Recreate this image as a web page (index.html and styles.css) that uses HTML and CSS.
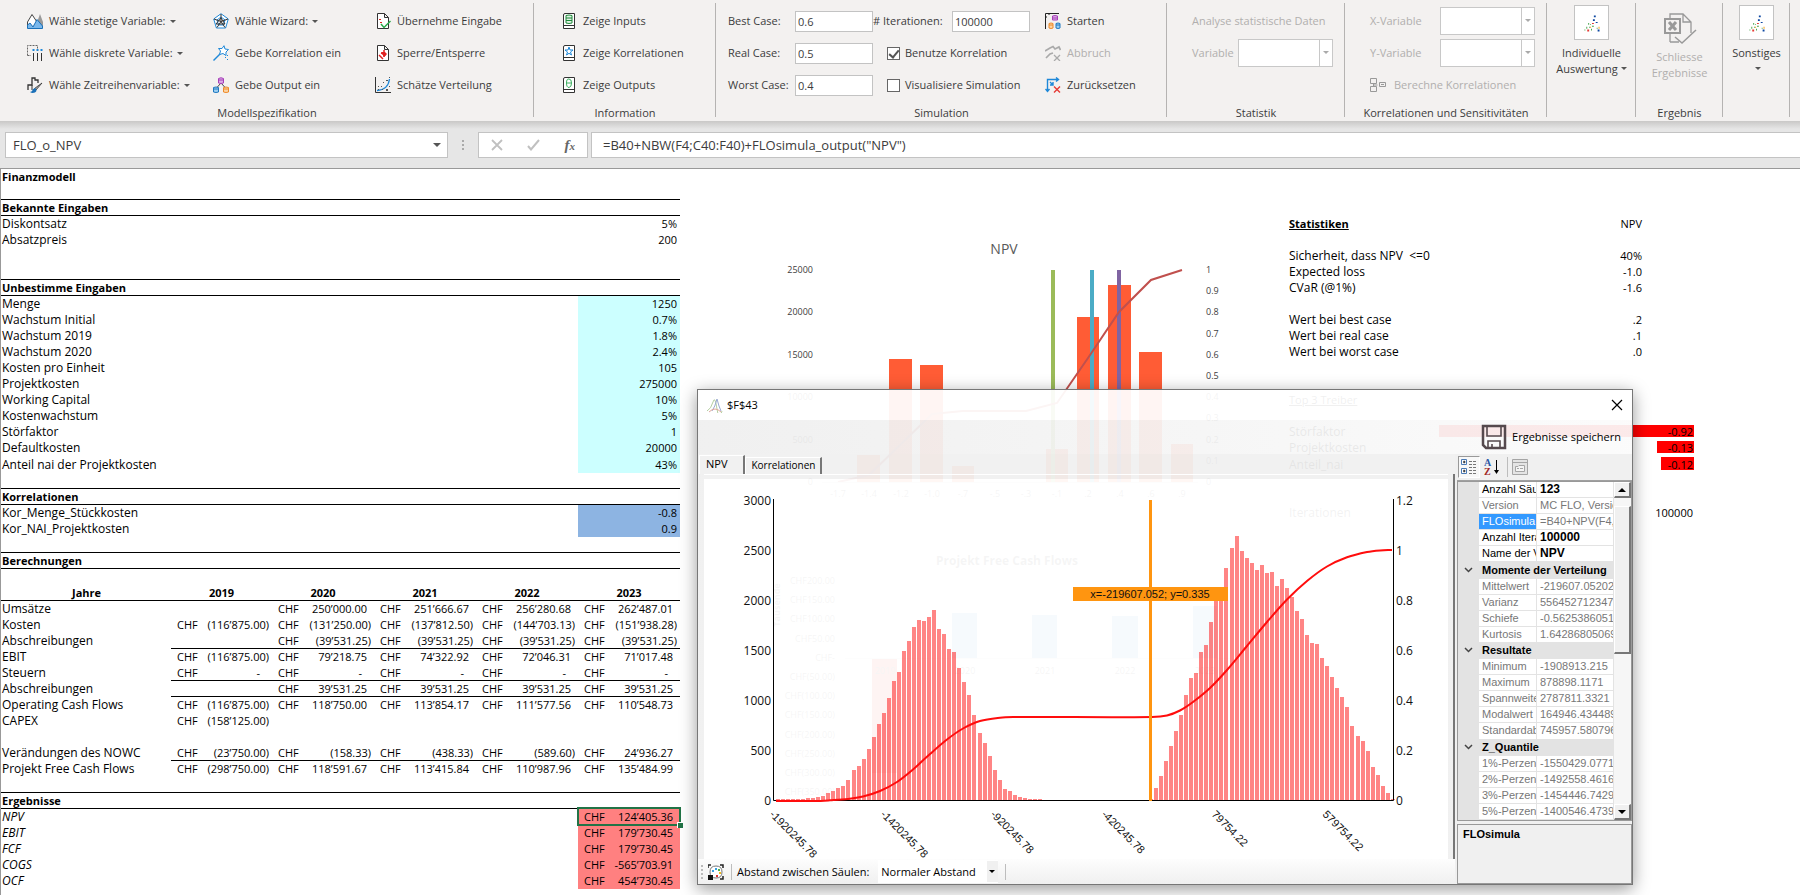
FILE: index.html
```html
<!DOCTYPE html>
<html lang="de">
<head>
<meta charset="utf-8">
<title>FLO_o_NPV</title>
<link rel="stylesheet" href="styles.css">
</head>
<body>
<svg class="defs" aria-hidden="true">
  <symbol id="excel-dots" viewBox="0 0 35 35"><path fill="#0d47a1" d="M20 10h2v2h-2zM22 17h2v1h-2zM19 14h2v2h-2zM24 25h2v2h-2z"/><path fill="#43a047" d="M14 18h1v2h-1zM16 19h1v1h-1zM12 22h1v2h-1zM18 21h2v1h-2zM10 25h1v1h-1zM23 23h1v1h-1zM17 24h1v2h-1zM15 22h1v1h-1z"/><path fill="#e53935" d="M13 25h2v2h-2zM18 18h2v1h-2z"/><path fill="#ff9800" d="M16 22h1v1h-1zM25 22h1v2h-1z"/></symbol>
  <symbol id="book" viewBox="0 0 12 16"><path fill="#fff" stroke="#333" d="M.5 15.500V2Q.5.500 2 .5H11.500V15.500ZM.5 12.500H11.500"/></symbol>
  <symbol id="page" viewBox="0 0 16 16"><path fill="#fff" stroke="#333" d="M2.500 15.500V.5H9.500L13.500 4.500V15.500ZM9.500.5V4.500H13.500"/></symbol>
</svg>

<header class="ribbon">
  <section class="group g-model">
    <div class="items">
      <button class="cmd"><svg viewBox="0 0 16 16" width="16" height="16"><path fill="#999" d="M8 15L13 1 16 9V15Z"/><path fill="#fff" stroke="#444" d="M.5 15V9L5 1.500 10 9"/><path fill="#7ab8ec" stroke="#1a70b8" d="M.5 15.500V12L3 10 6 14 10 6.500 15.500 13V15.500Z"/></svg>Wähle stetige Variable:<i class="caret"></i></button>
      <button class="cmd"><svg viewBox="0 0 16 16" width="16" height="16"><path fill="#fff" stroke="#1e88d8" d="M8 .7L15.300 6 12.600 15H3.400L.7 6ZM8 4L12 7 10.500 12H5.500L4 7Z"/><path fill="none" stroke="#333" d="M8 1V8.500L1 6M8 8.500L15 6M8 8.500L4 14.500M8 8.500L12 14.500M3 11L8 5 12 11Z"/></svg>Wähle Wizard:<i class="caret"></i></button>
      <button class="cmd"><svg viewBox="0 0 16 16" width="16" height="16"><use href="#page"/><path fill="none" stroke="#e02020" stroke-dasharray="2 2" d="M4 6.500H8M5 9.500H9"/><path fill="none" stroke="#2aa84a" stroke-width="1.500" d="M6 11L9 14.500 15.500 8"/></svg>Übernehme Eingabe</button>
      <button class="cmd"><svg viewBox="0 0 16 16" width="16" height="16"><path fill="none" stroke="#666" stroke-dasharray="2 1" d="M.5 10.500V.5H10.500V4M.5 10.500H4"/><path stroke="#333" d="M6.500 8V16M10.500 8V16M14.500 8V16"/><path fill="#1e88d8" d="M5.500 4h2v2h-2zM9.500 4h2v2h-2zM13.500 4h2v2h-2z"/></svg>Wähle diskrete Variable:<i class="caret"></i></button>
      <button class="cmd"><svg viewBox="0 0 16 16" width="16" height="16"><path stroke="#1e88d8" stroke-width="1.400" d="M.5 15.500L8 8"/><path fill="#fff" stroke="#1e88d8" d="M11 .7L12 4 15.500 4.500 13 7 13 10.500 10 8.500 6.500 9.500 7.500 6 5.500 3.500 9 3.500Z"/><path fill="#1e88d8" d="M12 12h1v1h-1zM14 10h1v1h-1zM14 14h1v1h-1z"/></svg>Gebe Korrelation ein</button>
      <button class="cmd"><svg viewBox="0 0 16 16" width="16" height="16"><use href="#page"/><path stroke="#e02020" stroke-width="1.500" d="M4 10L8 14M9 5V12M6 8L11 10"/><path fill="#e02020" d="M6 7L10 7 12 9 9 12Z"/></svg>Sperre/Entsperre</button>
      <button class="cmd"><svg viewBox="0 0 16 16" width="16" height="16"><path fill="none" stroke="#333" stroke-width="1.300" d="M1 13V8H5V1H8V3H11V6"/><path stroke="#333" d="M5 8V13"/><path fill="#aaa" stroke="#333" stroke-width=".8" d="M15 6L9 13 7.500 11.500Z"/><path fill="#1a70b8" d="M8 11Q11 13 8 15.500Q5 16.500 3 15Q6 14 5.500 12.500Z"/></svg>Wähle Zeitreihenvariable:<i class="caret"></i></button>
      <button class="cmd"><svg viewBox="0 0 16 16" width="16" height="16"><path fill="none" stroke="#444" d="M8 6L3.500 11M8 6L12.500 11"/><path fill="#dba9e6" stroke="#a63fb8" d="M5.500 1.500Q8 0 10.500 1.500V6Q8 7 5.500 6ZM5.500 3H10.500"/><path fill="#9fd0f2" stroke="#1e78c0" d="M.5 10.500Q3 9.500 5.500 10.500V15Q3 16 .5 15ZM.5 12H5.500"/><path fill="#fcd5a5" stroke="#ee8a2a" d="M10.500 10.500Q13 9.500 15.500 10.500V15Q13 16 10.500 15ZM10.500 12H15.500"/></svg>Gebe Output ein</button>
      <button class="cmd"><svg viewBox="0 0 16 16" width="16" height="16"><path fill="none" stroke="#333" d="M.5 0V15.500H16"/><path fill="none" stroke="#1e88d8" stroke-width="1.300" d="M2 13.500Q13 13 14.500 2"/><path fill="#555" d="M3 9h1v1h-1zM3 12h1v1h-1zM6 9h1v1h-1zM8 5h1v1h-1zM11 3h2v1h-2zM14 0h1v1h-1zM7 12h1v1h-1zM11 12h2v2h-2zM14 9h1v1h-1z"/></svg>Schätze Verteilung</button>
    </div>
    <h2>Modellspezifikation</h2>
  </section>

  <section class="group g-info">
    <div class="items">
      <button class="cmd"><svg viewBox="0 0 12 16" width="12" height="16"><use href="#book"/><path fill="#dff3e3" stroke="#1f8a3b" d="M3 2.500Q6 1.500 9 2.500V10Q6 11 3 10ZM3 5H9M3 7.500H9"/></svg>Zeige Inputs</button>
      <button class="cmd"><svg viewBox="0 0 12 16" width="12" height="16"><use href="#book"/><path fill="#fff" stroke="#1e88d8" d="M6 2L7 5H10L7.500 7 8.500 10 6 8.300 3.500 10 4.500 7 2 5H5Z"/></svg>Zeige Korrelationen</button>
      <button class="cmd"><svg viewBox="0 0 12 16" width="12" height="16"><use href="#book"/><path fill="none" stroke="#3cb060" d="M6 2Q8.500 2 8.500 6T6 10.500Q3.500 10.500 3.500 6T6 2ZM3.500 6H8.500"/></svg>Zeige Outputs</button>
    </div>
    <h2>Information</h2>
  </section>

  <section class="group g-sim">
    <div class="items">
      <label class="field"><span>Best Case:</span><input type="text" value="0.6"></label>
      <label class="field iter"><span># Iterationen:</span><input type="text" value="100000"></label>
      <button class="cmd"><svg viewBox="0 0 16 16" width="16" height="16"><path fill="none" stroke="#222" d="M.5 16V.5H14M.5 4H2M4 2V.5"/><path fill="#dba9e6" stroke="#a63fb8" d="M7.500 3Q10 2 12.500 3V7H7.500ZM7.500 5H12.500"/><path fill="#fcd5a5" stroke="#ee8a2a" d="M4 10.500Q6 9.500 8 10.500V15Q6 16 4 15ZM4 12H8"/><path fill="#9fd0f2" stroke="#1e78c0" d="M11 10.500Q13 9.500 15 10.500V15Q13 16 11 15ZM11 12H15"/></svg>Starten</button>
      <label class="field"><span>Real Case:</span><input type="text" value="0.5"></label>
      <label class="check"><input type="checkbox" checked>Benutze Korrelation</label>
      <button class="cmd" disabled><svg viewBox="0 0 16 16" width="16" height="16"><path fill="none" stroke="#aaa" stroke-width="1.700" d="M0 6L5 3 8 1.500 10 4 14 2 15.500 5M1 13L5 9 8 8"/><path stroke="#aaa" stroke-width="1.300" d="M9 10L15 16M15 10L9 16"/></svg>Abbruch</button>
      <label class="field"><span>Worst Case:</span><input type="text" value="0.4"></label>
      <label class="check"><input type="checkbox">Visualisiere Simulation</label>
      <button class="cmd"><svg viewBox="0 0 16 16" width="16" height="16"><path fill="none" stroke="#1e88d8" stroke-width="1.400" d="M2.500 14V2.500H13M11 .5L13.500 2.500 11 4.500M.5 12L2.500 14.500 4.500 12M5 5L8 8M8 5V8H5"/><path stroke="#e53935" stroke-width="1.400" d="M9 9.500L15 15.500M15 9.500L9 15.500"/></svg>Zurücksetzen</button>
    </div>
    <h2>Simulation</h2>
  </section>

  <section class="group g-stat off">
    <div class="items">
      <span>Analyse statistische Daten</span>
      <label class="field"><span>Variable</span><span class="combo"><select disabled></select></span></label>
    </div>
    <h2>Statistik</h2>
  </section>

  <section class="group g-corr off">
    <div class="items">
      <label class="field"><span>X-Variable</span><span class="combo"><select disabled></select></span></label>
      <label class="field"><span>Y-Variable</span><span class="combo"><select disabled></select></span></label>
      <button class="cmd" disabled><svg viewBox="0 0 16 16" width="16" height="16"><path fill="none" stroke="#999" d="M.5 1.500H6.500V6.500H.5ZM.5 9.500H6.500V14.500H.5ZM9.500 5.500H15.500V9.500H9.500ZM3.500 6.500V9.500M3.500 8H7.500M11 7.500H14"/></svg>Berechne Korrelationen</button>
    </div>
    <h2>Korrelationen und Sensitivitäten</h2>
  </section>

  <section class="group g-ind"><button class="big"><svg class="framed" width="35" height="35"><use href="#excel-dots"/></svg><span>Individuelle<br>Auswertung<i class="caret"></i></span></button></section>
  <section class="group g-res off">
    <button class="big low" disabled><svg viewBox="0 0 34 32" width="34" height="32"><path fill="none" stroke="#999" stroke-width="1.300" d="M7 29V1H20L28 9V20M20 1V9H28M7 29H16"/><path fill="#f3f1f0" stroke="#999" stroke-width="2" d="M2 6H17V20H2Z"/><path stroke="#999" stroke-width="3" d="M6 9L13 17M13 9L6 17"/><path fill="none" stroke="#999" stroke-width="1.500" d="M12 24L19 30 33 17"/></svg><span>Schliesse<br>Ergebnisse</span></button>
    <h2>Ergebnis</h2>
  </section>
  <section class="group g-misc"><button class="big"><svg class="framed" width="35" height="35"><use href="#excel-dots"/></svg><span>Sonstiges<br><i class="caret"></i></span></button></section>
</header>

<div class="formula-bar">
  <div class="namebox"><input type="text" value="FLO_o_NPV" aria-label="Namenfeld"><i class="caret"></i></div>
  <span class="grip3"><i></i><i></i><i></i></span>
  <div class="fx">
    <button aria-label="Abbrechen"><svg viewBox="0 0 12 12" width="12" height="12"><path stroke="#c0c0c0" stroke-width="1.800" d="M1 1L11 11M11 1L1 11"/></svg></button>
    <button aria-label="Eingeben"><svg viewBox="0 0 13 12" width="13" height="12"><path fill="none" stroke="#c0c0c0" stroke-width="2" d="M1 7L4 10.500 12 1"/></svg></button>
    <button class="fn" aria-label="Funktion einfügen">f<small>x</small></button>
  </div>
  <input class="formula" type="text" aria-label="Formel" value='=B40+NBW(F4;C40:F40)+FLOsimula_output("NPV")'>
</div>

<main class="sheet">
  <table class="model">
    <colgroup><col class="c-label"><col class="c-first"><col class="c-year"><col class="c-year"><col class="c-year"><col class="c-year"></colgroup>
    <tr><th colspan="6">Finanzmodell</th></tr>
    <tr class="line"><td colspan="6"></td></tr>
    <tr class="line"><th colspan="6">Bekannte Eingaben</th></tr>
    <tr><td colspan="5">Diskontsatz</td><td class="v">5%</td></tr>
    <tr><td colspan="5">Absatzpreis</td><td class="v">200</td></tr>
    <tr><td colspan="6"></td></tr>
    <tr class="line"><td colspan="6"></td></tr>
    <tr class="line"><th colspan="6">Unbestimme Eingaben</th></tr>
    <tr><td colspan="5">Menge</td><td class="v in">1250</td></tr>
    <tr><td colspan="5">Wachstum Initial</td><td class="v in">0.7%</td></tr>
    <tr><td colspan="5">Wachstum 2019</td><td class="v in">1.8%</td></tr>
    <tr><td colspan="5">Wachstum 2020</td><td class="v in">2.4%</td></tr>
    <tr><td colspan="5">Kosten pro Einheit</td><td class="v in">105</td></tr>
    <tr><td colspan="5">Projektkosten</td><td class="v in">275000</td></tr>
    <tr><td colspan="5">Working Capital</td><td class="v in">10%</td></tr>
    <tr><td colspan="5">Kostenwachstum</td><td class="v in">5%</td></tr>
    <tr><td colspan="5">Störfaktor</td><td class="v in">1</td></tr>
    <tr><td colspan="5">Defaultkosten</td><td class="v in">20000</td></tr>
    <tr class="tall"><td colspan="5">Anteil nai der Projektkosten</td><td class="v in">43%</td></tr>
    <tr class="line"><td colspan="6"></td></tr>
    <tr class="line"><th colspan="6">Korrelationen</th></tr>
    <tr><td colspan="5">Kor_Menge_Stückkosten</td><td class="v cor">-0.8</td></tr>
    <tr><td colspan="5">Kor_NAI_Projektkosten</td><td class="v cor">0.9</td></tr>
    <tr class="line"><td colspan="6"></td></tr>
    <tr class="line"><th colspan="6">Berechnungen</th></tr>
    <tr><td colspan="6"></td></tr>
    <tr class="line years"><th>Jahre</th><th>2019</th><th>2020</th><th>2021</th><th>2022</th><th>2023</th></tr>
    <tr><td>Umsätze</td><td></td><td class="m"><i>CHF</i>250’000.00</td><td class="m"><i>CHF</i>251’666.67</td><td class="m"><i>CHF</i>256’280.68</td><td class="m"><i>CHF</i>262’487.01</td></tr>
    <tr><td>Kosten</td><td class="m n"><i>CHF</i>(116’875.00)</td><td class="m n"><i>CHF</i>(131’250.00)</td><td class="m n"><i>CHF</i>(137’812.50)</td><td class="m n"><i>CHF</i>(144’703.13)</td><td class="m n"><i>CHF</i>(151’938.28)</td></tr>
    <tr class="part"><td>Abschreibungen</td><td></td><td class="m n"><i>CHF</i>(39’531.25)</td><td class="m n"><i>CHF</i>(39’531.25)</td><td class="m n"><i>CHF</i>(39’531.25)</td><td class="m n"><i>CHF</i>(39’531.25)</td></tr>
    <tr><td>EBIT</td><td class="m n"><i>CHF</i>(116’875.00)</td><td class="m"><i>CHF</i>79’218.75</td><td class="m"><i>CHF</i>74’322.92</td><td class="m"><i>CHF</i>72’046.31</td><td class="m"><i>CHF</i>71’017.48</td></tr>
    <tr class="part"><td>Steuern</td><td class="m d"><i>CHF</i>-</td><td class="m d"><i>CHF</i>-</td><td class="m d"><i>CHF</i>-</td><td class="m d"><i>CHF</i>-</td><td class="m d"><i>CHF</i>-</td></tr>
    <tr class="part"><td>Abschreibungen</td><td></td><td class="m"><i>CHF</i>39’531.25</td><td class="m"><i>CHF</i>39’531.25</td><td class="m"><i>CHF</i>39’531.25</td><td class="m"><i>CHF</i>39’531.25</td></tr>
    <tr><td>Operating Cash Flows</td><td class="m n"><i>CHF</i>(116’875.00)</td><td class="m"><i>CHF</i>118’750.00</td><td class="m"><i>CHF</i>113’854.17</td><td class="m"><i>CHF</i>111’577.56</td><td class="m"><i>CHF</i>110’548.73</td></tr>
    <tr><td>CAPEX</td><td class="m n"><i>CHF</i>(158’125.00)</td><td colspan="4"></td></tr>
    <tr><td colspan="6"></td></tr>
    <tr class="part"><td>Verändungen des NOWC</td><td class="m n"><i>CHF</i>(23’750.00)</td><td class="m n"><i>CHF</i>(158.33)</td><td class="m n"><i>CHF</i>(438.33)</td><td class="m n"><i>CHF</i>(589.60)</td><td class="m"><i>CHF</i>24’936.27</td></tr>
    <tr><td>Projekt Free Cash Flows</td><td class="m n"><i>CHF</i>(298’750.00)</td><td class="m"><i>CHF</i>118’591.67</td><td class="m"><i>CHF</i>113’415.84</td><td class="m"><i>CHF</i>110’987.96</td><td class="m"><i>CHF</i>135’484.99</td></tr>
    <tr class="line"><td colspan="6"></td></tr>
    <tr class="line"><th colspan="6">Ergebnisse</th></tr>
    <tr class="out"><td colspan="5">NPV</td><td class="m sel"><i>CHF</i>124’405.36</td></tr>
    <tr class="out"><td colspan="5">EBIT</td><td class="m"><i>CHF</i>179’730.45</td></tr>
    <tr class="out"><td colspan="5">FCF</td><td class="m"><i>CHF</i>179’730.45</td></tr>
    <tr class="out"><td colspan="5">COGS</td><td class="m"><i>CHF</i>-565’703.91</td></tr>
    <tr class="out"><td colspan="5">OCF</td><td class="m"><i>CHF</i>454’730.45</td></tr>
  </table>

  <div class="charts">
    <svg id="npv-chart" viewBox="770 236 460 264" width="460" height="264" role="img" aria-label="NPV">
      <text class="ct" x="1004" y="254">NPV</text>
      <g fill="#ff5c35"><path d="M857 455h23v27h-23zM889 359h23v123h-23zM920 365h23v117h-23zM952 466h22v16h-22zM1046 449h22v33h-22zM1077 317h22v165h-22zM1108 285h23v197h-23zM1139 352h23v130h-23zM1171 444h22v38h-22z"/></g>
      <path fill="#9bbb59" d="M1051 270h4v212h-4z"/><path fill="#4bacc6" d="M1090 270h4v212h-4z"/><path fill="#8064a2" d="M1117 270h4v212h-4z"/>
      <path fill="none" stroke="#c0504d" stroke-width="2" d="M838 482L869 475 932 414 963 411H1026L1057 403 1088 358 1119 312 1151 280 1182 270"/>
      <path stroke="#d9d9d9" d="M822 482.500H1198"/>
    </svg>
    <svg id="fcf-chart" viewBox="770 545 460 260" width="460" height="260" role="img" aria-label="Projekt Free Cash Flows">
      <text class="fcf-title" x="1007" y="565">Projekt Free Cash Flows</text>
      <path fill="#e8331f" d="M872 659h25v114h-25z"/>
      <path fill="#5b9bd5" d="M952 613h25v45h-25zM1032 615h25v43h-25zM1112 616h26v42h-26zM1193 606h24v52h-24z"/>
      <path stroke="#d9d9d9" d="M845 658.500H1245"/>
      <text class="rot" transform="translate(780 605) rotate(-90)">Tausende</text>
    </svg>
  </div>

  <table class="stats">
    <colgroup><col class="s-label"><col class="s-npv"><col class="s-drv"></colgroup>
    <tr><th>Statistiken</th><td>NPV</td><td></td></tr>
    <tr><td colspan="3"></td></tr>
    <tr><td>Sicherheit, dass NPV&nbsp; &lt;=0</td><td>40%</td><td></td></tr>
    <tr><td>Expected loss</td><td>-1.0</td><td></td></tr>
    <tr><td>CVaR (@1%)</td><td>-1.6</td><td></td></tr>
    <tr><td colspan="3"></td></tr>
    <tr><td>Wert bei best case</td><td>.2</td><td></td></tr>
    <tr><td>Wert bei real case</td><td>.1</td><td></td></tr>
    <tr><td>Wert bei worst case</td><td>.0</td><td></td></tr>
    <tr><td colspan="3"></td></tr>
    <tr><td colspan="3"></td></tr>
    <tr><th class="sub">Top 3 Treiber</th><td></td><td></td></tr>
    <tr><td colspan="3"></td></tr>
    <tr><td>Störfaktor</td><td></td><td class="bar"><b style="width:255px"></b><span>-0.92</span></td></tr>
    <tr><td>Projektkosten</td><td></td><td class="bar"><b style="width:37px"></b><span>-0.13</span></td></tr>
    <tr class="tall"><td>Anteil_nai</td><td></td><td class="bar"><b style="width:33px"></b><span>-0.12</span></td></tr>
    <tr><td colspan="3"></td></tr>
    <tr><td colspan="3"></td></tr>
    <tr><td>Iterationen</td><td></td><td>100000</td></tr>
  </table>

  <section class="dialog" role="dialog" aria-label="$F$43">
    <header class="titlebar">
      <svg viewBox="0 0 16 16" width="16" height="16"><path fill="none" stroke="#b5cfa2" d="M0 14Q4 12 6 5T10 12 15 14"/><path fill="none" stroke="#9aa9d0" d="M5 14Q8 10 10 2Q12 10 14 14"/><path fill="none" stroke="#e0a89c" d="M2 15Q8 9 14 15"/></svg>
      <span>$F$43</span>
      <button aria-label="Schliessen"><svg viewBox="0 0 12 12" width="12" height="12"><path stroke="#000" stroke-width="1.200" d="M1 1L11 11M11 1L1 11"/></svg></button>
    </header>
    <div class="save-row">
      <button><svg viewBox="0 0 26 26" width="26" height="26"><path fill="none" stroke="#55494d" stroke-width="2.500" d="M2 2H24V24H5L2 21Z"/><path fill="none" stroke="#55494d" stroke-width="1.600" d="M6 2V12H20V2M7 24V17H19V24M11 20V24"/></svg>Ergebnisse speichern</button>
    </div>
    <div class="dialog-body">
      <div class="view">
        <nav class="tabs"><button class="on">NPV</button><button>Korrelationen</button></nav>
        <div class="tabpage">
          <svg id="dist" viewBox="704 478 744 380" role="img" aria-label="Verteilung NPV"></svg>
        </div>
        <footer class="status">
          <span class="grip"></span>
          <button aria-label="Farben"><svg viewBox="0 0 16 16" width="16" height="16"><path fill="none" stroke="#222" stroke-width="1.500" d="M0 4V1H3M12 1H15V4M15 12V15H12"/><path fill="#fff" stroke="#777" d="M8 2Q14 2 14 8Q14 14 8 14Q2 14 2 8Q2 2 8 2"/><path fill="#111" d="M0 11h5v5h-5z"/><path fill="#39a0e0" d="M4 6h2v2h-2zM7 4h2v2h-2z"/><path fill="#49b04c" d="M10 5h2v2h-2z"/><path fill="#f2b91c" d="M11 8h2v2h-2z"/><path fill="#d33" d="M8 11h2v2h-2z"/></svg></button>
          <span class="vsep"></span>
          <label for="gap">Abstand zwischen Säulen:</label>
          <span class="gapsel"><select id="gap"><option>Normaler Abstand</option></select></span>
          <span class="vsep"></span>
        </footer>
      </div>
      <aside class="props">
        <div class="ptools">
          <button class="on" aria-label="Kategorien"><svg viewBox="0 0 18 18" width="18" height="18"><path fill="#fff" stroke="#4a7ab5" d="M1.500 1.500H6.500V6.500H1.500ZM1.500 10.500H6.500V15.500H1.500Z"/><path stroke="#222" d="M3 4H5.500M4.200 2.700V5.300M3 13H5.500M4.200 11.700V14.300"/><path stroke="#777" stroke-dasharray="3 1" d="M9 3.500H16M9 6.500H16M9 9.500H16M9 12.500H16M9 15.500H16"/></svg></button>
          <button aria-label="Alphabetisch"><svg viewBox="0 0 16 18" width="16" height="18"><text class="az-a" x="0" y="8">A</text><text class="az-z" x="0" y="17">Z</text><path fill="#000" d="M12 2h1v10h2l-2.500 4-2.500-4h2z"/></svg></button>
          <span class="vsep"></span>
          <button aria-label="Eigenschaftenseiten" disabled><svg viewBox="0 0 16 16" width="16" height="16"><path fill="#e4e4e4" stroke="#a5a5a5" d="M.5.500H15.500V15.500H.5ZM.5 3.500H15.500"/><path fill="#f4f4f4" stroke="#a5a5a5" d="M3.500 7.500H6L7 6.500H12.500V12.500H3.500ZM5 9.500H7M8 9.500H11"/></svg></button>
        </div>
        <div class="pgrid">
          <table>
            <colgroup><col class="p-mark"><col class="p-name"><col></colgroup>
            <tr><td></td><td class="k">Anzahl Säulen</td><td class="b">123</td></tr>
            <tr class="ro"><td></td><td>Version</td><td>MC FLO, Version</td></tr>
            <tr class="ro cur"><td></td><td>FLOsimula</td><td>=B40+NPV(F4,C40</td></tr>
            <tr><td></td><td>Anzahl Iterationen</td><td class="b">100000</td></tr>
            <tr><td></td><td>Name der Variable</td><td class="b">NPV</td></tr>
            <tr class="cat"><td><svg viewBox="0 0 9 6" width="9" height="6"><path d="M1 1L4.500 4.500 8 1"/></svg></td><th colspan="2">Momente der Verteilung</th></tr>
            <tr class="ro"><td></td><td>Mittelwert</td><td>-219607.052026</td></tr>
            <tr class="ro"><td></td><td>Varianz</td><td>556452712347.</td></tr>
            <tr class="ro"><td></td><td>Schiefe</td><td>-0.56253860518</td></tr>
            <tr class="ro"><td></td><td>Kurtosis</td><td>1.64286805069</td></tr>
            <tr class="cat"><td><svg viewBox="0 0 9 6" width="9" height="6"><path d="M1 1L4.500 4.500 8 1"/></svg></td><th colspan="2">Resultate</th></tr>
            <tr class="ro"><td></td><td>Minimum</td><td>-1908913.215</td></tr>
            <tr class="ro"><td></td><td>Maximum</td><td>878898.1171</td></tr>
            <tr class="ro"><td></td><td>Spannweite</td><td>2787811.3321</td></tr>
            <tr class="ro"><td></td><td>Modalwert</td><td>164946.434489</td></tr>
            <tr class="ro"><td></td><td>Standardabweichung</td><td>745957.580796</td></tr>
            <tr class="cat"><td><svg viewBox="0 0 9 6" width="9" height="6"><path d="M1 1L4.500 4.500 8 1"/></svg></td><th colspan="2">Z_Quantile</th></tr>
            <tr class="ro"><td></td><td>1%-Perzentil</td><td>-1550429.0771</td></tr>
            <tr class="ro"><td></td><td>2%-Perzentil</td><td>-1492558.4616</td></tr>
            <tr class="ro"><td></td><td>3%-Perzentil</td><td>-1454446.7429</td></tr>
            <tr class="ro"><td></td><td>5%-Perzentil</td><td>-1400546.4739</td></tr>
          </table>
          <div class="scroll">
            <button aria-label="Nach oben"><svg viewBox="0 0 8 4" width="8" height="4"><path d="M0 4L4 0 8 4Z"/></svg></button>
            <span class="thumb"></span>
            <button aria-label="Nach unten"><svg viewBox="0 0 8 4" width="8" height="4"><path d="M0 0L4 4 8 0Z"/></svg></button>
          </div>
        </div>
        <div class="pdesc">FLOsimula</div>
      </aside>
    </div>
  </section>
</main>
<script src="script.js"></script>
</body>
</html>
```

FILE: styles.css
```css
* { box-sizing: border-box; }
body {
  margin: 0; min-height: 100vh; display: flex; flex-direction: column; overflow: hidden;
  font: 11px/16px "Open Sans", "Noto Sans", sans-serif; color: #3c3c3c; background: #fff;
}
button, input, select { font: inherit; color: inherit; }
button { border: 0; padding: 0; background: none; }
svg { flex: none; display: block; }
.defs { position: absolute; width: 0; height: 0; }
.caret { display: inline-block; border: 3px solid transparent; border-top-color: #555; border-bottom: 0; }

/* Ribbon */
.ribbon { display: flex; height: 121px; background: #f3f1f0; }
.group { display: flex; flex-direction: column; justify-content: space-between; position: relative; padding: 5px 0 0; flex: none; }
.group::after { content: ""; position: absolute; right: 0; top: 3px; height: 114px; width: 1px; background: #b5b3b2; }
.group h2 { margin: 0; font-size: 11px; line-height: 16px; font-weight: 400; text-align: center; color: #3c3c3c; }
.items { display: grid; grid-auto-rows: 32px; align-items: center; }
.g-model { width: 534px; }
.g-model .items { padding-left: 27px; grid-template-columns: 186px 162px auto; }
.g-info { width: 182px; }
.g-info .items { padding-left: 29px; }
.g-info .cmd { gap: 8px; }
.g-sim { width: 451px; }
.g-sim .items { padding-left: 12px; grid-template-columns: 145px 172px auto; }
.g-stat { width: 178px; }
.g-stat .items { padding-left: 25px; }
.g-stat .field { grid-template-columns: 46px 95px; }
.g-corr { width: 202px; }
.g-corr .items { padding-left: 25px; }
.g-corr .field { grid-template-columns: 70px 95px; }
.g-corr .cmd { gap: 8px; }
.g-ind { width: 89px; }
.g-res { width: 87px; }
.g-misc { width: 67px; }
.off { color: #b1afae; }
.cmd { display: flex; align-items: center; gap: 6px; white-space: nowrap; }
.cmd .caret { margin-left: -2px; }
.cmd:disabled { color: #b1afae; }
.field { display: grid; grid-template-columns: 67px 78px; align-items: center; white-space: nowrap; }
.field.iter { grid-template-columns: 79px 78px; }
.field input { width: 78px; height: 21px; border: 1px solid #c3c3c3; background: #fff; padding: 0 2px; outline: 0; }
.check { display: flex; align-items: center; gap: 5px; padding-left: 14px; white-space: nowrap; }
.check input { appearance: none; width: 13px; height: 13px; margin: 0; border: 1px solid #666; background: #fff; display: grid; place-items: center; }
.check input:checked::before { content: ""; width: 8px; height: 4px; border: solid #555; border-width: 0 0 2px 2px; transform: rotate(-50deg); }
.combo { position: relative; display: block; width: 95px; height: 28px; }
.combo select { appearance: none; width: 100%; height: 100%; border: 1px solid #c8c8c8; border-radius: 0; background: #fff; opacity: 1; }
.combo::before { content: ""; position: absolute; right: 13px; top: 1px; bottom: 1px; width: 1px; background: #c8c8c8; }
.combo::after { content: ""; position: absolute; right: 4px; top: 12px; border: 3px solid transparent; border-top-color: #aaa; border-bottom: 0; }
.big { display: flex; flex-direction: column; align-items: center; gap: 5px; line-height: 16px; }
.big.low { gap: 4px; padding-top: 8px; }
.big .caret { margin-left: 3px; vertical-align: 3px; }
.off .big { color: #b1afae; }
.framed { background: #fff; border: 1px solid #c3c3c3; }

/* Formula bar */
.formula-bar { display: flex; height: 47px; padding: 11px 0 10px 5px; background: linear-gradient(#c9c8c7, #e6e6e6 8px); font-size: 13px; }
.namebox, .fx, .formula { border: 1px solid #c3c3c3; background: #fff; height: 26px; }
.namebox { width: 443px; display: flex; align-items: center; padding: 0 6px 0 7px; }
.namebox input { flex: 1; min-width: 0; border: 0; padding: 0; background: none; outline: 0; }
.namebox .caret { border-width: 4px 4px 0; }
.grip3 { width: 30px; display: flex; flex-direction: column; align-items: center; justify-content: center; gap: 2px; }
.grip3 i { width: 2px; height: 2px; background: #aaa; }
.fx { width: 110px; display: flex; align-items: center; justify-content: space-around; }
.fx .fn { font: italic bold 15px/18px "Liberation Serif", serif; color: #666; }
.fx small { font-size: 11px; }
.formula { flex: 1; min-width: 0; margin-left: 3px; border-right: 0; padding: 0 11px; outline: 0; }

/* Sheet */
.sheet { position: relative; flex: 1; display: flex; align-items: flex-start; border: solid #999; border-width: 1px 0 0 1px; color: #000; background: #fff; }
.sheet table { border-spacing: 0; table-layout: fixed; flex: none; }
.model { width: 679px; }
.c-label { width: 170px; }
.c-first { width: 101px; }
.model tr, .stats tr { height: 16px; }
.model tr:first-child, .model tr:first-child th { height: 15px; line-height: 14px; }
.model td, .model th, .stats td, .stats th { height: 16px; line-height: 16px; padding: 0; vertical-align: middle; white-space: nowrap; text-align: left; }
.model td, .stats td:first-child { font-size: 12px; }
.model td:first-child, .model th:first-child { padding-left: 1px; }
.model th { font-size: 11px; font-weight: 700; }
.model .tall td, .stats .tall td { height: 17px; line-height: 17px; }
.line td, .line th { box-shadow: inset 0 -1px #000; }
.part td:not(:first-child) { box-shadow: inset 0 -1px #000; }
.model .years th { text-align: center; }
.model td.v { font-size: 11px; text-align: right; padding-right: 3px; }
.in { background: #ccffff; }
.cor { background: #8db4e2; }
.model td.m { font-size: 11px; text-align: right; padding: 0 7px 0 6px; }
.m i { float: left; font-style: normal; }
.model td.n { padding-right: 3px; }
.model td.d { padding-right: 12px; }
.out td:first-child { font-style: italic; }
.out .m { background: #ff8080; }
.out .sel { position: relative; }
.sel::before { content: ""; position: absolute; inset: -2px -1px -1px -1px; border: 2px solid #217346; }
.sel::after { content: ""; position: absolute; right: -3px; bottom: -3px; width: 5px; height: 5px; background: #217346; border: solid #fff; border-width: 1px 0 0 1px; }

.charts { flex: 1; min-width: 0; padding: 67px 0 0 90px; display: flex; flex-direction: column; gap: 45px; }
.charts text { font-size: 9px; fill: #404040; }
.charts .ct { font-size: 14px; text-anchor: middle; fill: #595959; }
.charts .fcf-title { font-size: 12px; font-weight: 700; text-anchor: middle; }
.charts .rot { font-weight: 700; text-anchor: middle; }
.end { text-anchor: end; }
.mid { text-anchor: middle; }

.stats { width: 406px; margin: 47px 106px 0 0; }
.s-npv { width: 100px; }
.s-drv { width: 51px; }
.stats td { font-size: 11px; }
.stats th { font-size: 11px; font-weight: 700; text-decoration: underline; padding-left: 1px; }
.stats td:first-child { padding-left: 1px; }
.stats .sub { font-weight: 400; }
.stats td:nth-child(2), .stats td:nth-child(3) { text-align: right; padding-right: 1px; }
.stats .bar { position: relative; }
.bar b { position: absolute; right: 0; top: 1px; bottom: 3px; background: #f00; }
.bar span { position: relative; }

/* Result window */
.dialog { position: absolute; left: 696px; right: 167px; top: 220px; border: 1px solid #777; box-shadow: 0 4px 16px rgba(0, 0, 0, .4); display: flex; flex-direction: column; }
.titlebar { display: flex; align-items: center; height: 30px; padding: 0 9px 1px; gap: 4px; background: rgba(255, 255, 255, .94); }
.titlebar span { flex: 1; }
.save-row { display: flex; justify-content: flex-end; height: 34px; padding-right: 11px; background: linear-gradient(90deg, rgba(239, 239, 239, .95), rgba(251, 251, 251, .93)); }
.save-row button { display: flex; align-items: center; gap: 5px; }
.dialog-body { display: flex; }
.view { flex: 1; min-width: 0; display: flex; flex-direction: column; }
.tabs { display: flex; align-items: flex-end; height: 20px; padding-left: 1px; background: rgba(240, 240, 240, .95); }
.tabs button { height: 17px; border: solid #fff; border-width: 1px 2px 0 1px; border-right-color: #777; padding: 0 5px 1px; line-height: 15px; font-size: 10px; }
.tabs .on { height: 19px; padding: 0 16px 3px 6px; font-size: 11px; }
.tabpage { padding: 0 5px 0 6px; background: linear-gradient(90deg, rgba(240, 240, 240, .95) 6px, transparent 6px calc(100% - 5px), rgba(240, 240, 240, .95) calc(100% - 5px)); border-right: 2px solid #777; }
.tabpage::before { content: ""; display: block; height: 4px; background: rgba(240, 240, 240, .95); border-top: 1px solid #fff; }
.tabpage svg { width: 100%; background: rgba(255, 255, 255, .95); }
#dist text { font-size: 12px; fill: #111; }
#dist .xl { font: 11px "Liberation Sans", Arial, sans-serif; }
.status { display: flex; align-items: center; height: 25px; padding-left: 3px; background: linear-gradient(#fdfdfd, #f0f0f0); }
.grip { width: 2px; height: 14px; margin-right: 5px; background: repeating-linear-gradient(#bbb 0 2px, transparent 2px 4px); }
.vsep { width: 1px; height: 16px; background: #bdbdbd; margin: 0 5px 0 7px; }
.gapsel { position: relative; margin-left: 9px; width: 120px; height: 23px; background: #fff; }
.gapsel select { appearance: none; width: 100%; height: 100%; border: 0; padding: 0 0 0 3px; background: none; }
.gapsel::before { content: ""; position: absolute; right: 0; top: 1px; bottom: 1px; width: 11px; background: #f0f0f0; }
.gapsel::after { content: ""; position: absolute; right: 3px; top: 10px; border: 3px solid transparent; border-top-color: #000; border-bottom: 0; }

.props { width: 177px; flex: none; padding-left: 2px; display: flex; flex-direction: column; background: #f0f0f0; font: 11px/15px "Liberation Sans", Arial, sans-serif; }
.ptools { display: flex; align-items: center; height: 27px; padding-left: 1px; gap: 4px; border-bottom: 1px solid #a0a0a0; }
.ptools .on { border: 1px solid; border-color: #999 #fff #fff #999; padding: 1px; background: #f8f8f8; }
.ptools .vsep { height: 20px; margin: 0 0 0 3px; }
.az-a, .az-z { font: bold 10px "Liberation Serif", serif; }
.az-a { fill: #2b57a5; }
.az-z { fill: #a02525; }
.pgrid { display: flex; flex: 1; border: 1px solid #999; background: #fff; }
.pgrid table { flex: 1 1 0; width: 0; }
.p-mark { width: 21px; }
.p-name { width: 58px; }
.pgrid td, .pgrid th { height: 16px; padding: 0 0 0 3px; border: solid #e3e3e3; border-width: 0 1px 1px 0; overflow: hidden; white-space: nowrap; text-align: left; line-height: 15px; }
.pgrid td:first-child, .pgrid .cat th { background: #e3e3e3; }
.pgrid td:first-child { padding: 0 0 0 6px; }
.pgrid .ro td { color: #777; }
.pgrid .cur td:nth-child(2) { background: #3399ff; color: #fff; }
.pgrid .b { font-weight: 700; font-size: 12px; }
.cat path { fill: none; stroke: #444; stroke-width: 1.5; }
.scroll { width: 17px; display: flex; flex-direction: column; background: #f6f6f6; }
.scroll button { height: 16px; display: grid; place-items: center; border: solid; border-width: 1px 2px 2px 1px; border-color: #fff #777 #777 #fff; background: #f0f0f0; }
.thumb { margin: 8px 0 auto; height: 148px; border: solid; border-width: 1px 2px 2px 1px; border-color: #fff #777 #777 #fff; background: #f0f0f0; }
.pdesc { height: 60px; margin-top: 3px; border: 1px solid #999; padding: 2px 5px; font-weight: 700; color: #000; }
```

FILE: script.js
```js
const NS = 'http://www.w3.org/2000/svg';
function add(parent, name, attrs, text) {
  const el = document.createElementNS(NS, name);
  for (const k in attrs) el.setAttribute(k, attrs[k]);
  if (text !== undefined) el.textContent = text;
  parent.appendChild(el);
  return el;
}

// NPV overview chart: axis labels
const npv = document.getElementById('npv-chart');
[25000, 20000, 15000, 10000, 5000, 0].forEach((v, i) =>
  add(npv, 'text', { class: 'end', x: 813, y: Math.round(273 + i * 42.4) }, v));
['1', '0.9', '0.8', '0.7', '0.6', '0.5', '0.4', '0.3', '0.2', '0.1', '0'].forEach((v, i) =>
  add(npv, 'text', { x: 1206, y: Math.round(273 + i * 21.2) }, v));
['-1.7', '-1.4', '-1.2', '-1.0', '-.7', '-.5', '-.3', '-.1', '.2', '.4', '.6', '.9'].forEach((v, i) =>
  add(npv, 'text', { class: 'mid', x: Math.round(838 + i * 31.3), y: 497 }, v));

// Free cash flow chart: axis labels
const fcf = document.getElementById('fcf-chart');
['CHF200.00', 'CHF150.00', 'CHF100.00', 'CHF50.00', 'CHF-', 'CHF(50.00)', 'CHF(100.00)', 'CHF(150.00)',
 'CHF(200.00)', 'CHF(250.00)', 'CHF(300.00)', 'CHF(350.00)'].forEach((v, i) =>
  add(fcf, 'text', { class: 'end', x: 835, y: Math.round(584 + i * 19.2) }, v));
['2019', '2020', '2021', '2022', '2023'].forEach((v, i) =>
  add(fcf, 'text', { class: 'mid', x: 885 + i * 80, y: 674 }, v));

// Distribution chart
const dist = document.getElementById('dist');
const base = 799;
const heights = [
  1, 1, 1, 1, 1, 1, 2, 2, 3, 4, 7, 9, 12, 14, 20, 30, 34, 41, 51, 63, 76, 87, 102, 119, 128, 149, 159, 173, 180, 179,
  183, 190, 171, 166, 151, 148, 132, 118, 105, 85, 67, 57, 44, 30, 20, 11, 9, 5, 3, 2, 1, 1, 1,
  ...Array(21).fill(0), 1,
  12, 24, 39, 54, 69, 85, 105, 122, 127, 148, 155, 178, 202, 213, 232, 252, 264, 249, 242, 237, 230, 235, 227, 228,
  214, 221, 212, 203, 189, 181, 165, 157, 156, 142, 134, 123, 112, 103, 93, 74, 64, 59, 49, 33, 25, 14, 7, 1
];
heights.forEach((h, i) => {
  if (h) add(dist, 'rect', { x: Math.round(775.9 + i * 5.04), y: base - h, width: 4, height: h, fill: '#f00', 'fill-opacity': 0.48 });
});
add(dist, 'path', { d: 'M773.5 498V799.500H1393.500V498', fill: 'none', stroke: '#000' });

const pts = [[776, 800], [815, 800], [830, 799.3], [848, 798], [863, 795.5], [880, 790], [897, 781], [913, 768.5],
  [930, 753], [947, 738.5], [963, 727.5], [980, 720], [1000, 716.7], [1015, 716], [1035, 716], [1152, 716],
  [1167, 714.5], [1180, 709.5], [1193, 701], [1210, 687], [1227, 669], [1247, 645], [1267, 621], [1287, 598.5],
  [1307, 580], [1327, 565.5], [1347, 556.3], [1367, 551], [1380, 549.4], [1392, 549]];
let d = `M${pts[0]}`;
for (let i = 0; i < pts.length - 1; i++) {
  const [p0, p1, p2, p3] = [pts[Math.max(i - 1, 0)], pts[i], pts[i + 1], pts[Math.min(i + 2, pts.length - 1)]];
  const dx = p2[0] - p1[0];
  const s1 = (p2[1] - p0[1]) / (p2[0] - p0[0]), s2 = (p3[1] - p1[1]) / (p3[0] - p1[0]);
  d += ` C${p1[0] + dx / 3} ${p1[1] + s1 * dx / 3} ${p2[0] - dx / 3} ${p2[1] - s2 * dx / 3} ${p2[0]} ${p2[1]}`;
}
add(dist, 'path', { d, fill: 'none', stroke: '#ff0d0d', 'stroke-width': 2 });

[3000, 2500, 2000, 1500, 1000, 500, 0].forEach((v, i) =>
  add(dist, 'text', { class: 'end', x: 771, y: 504 + i * 50 }, v));
['1.2', '1', '0.8', '0.6', '0.4', '0.2', '0'].forEach((v, i) =>
  add(dist, 'text', { x: 1396, y: 504 + i * 50 }, v));
['-1920245.78', '-1420245.78', '-920245.78', '-420245.78', '79754.22', '579754.22'].forEach((v, i) =>
  add(dist, 'text', { class: 'xl', transform: `translate(${Math.round(769 + i * 110.5)} 814) rotate(45)` }, v));

add(dist, 'rect', { x: 1149, y: 499, width: 3, height: 301, fill: '#ff9510' });
add(dist, 'rect', { x: 1073, y: 586, width: 155, height: 14, fill: '#ff9510' });
add(dist, 'text', { class: 'xl mid', x: 1150, y: 597 }, 'x=-219607.052; y=0.335');
```
